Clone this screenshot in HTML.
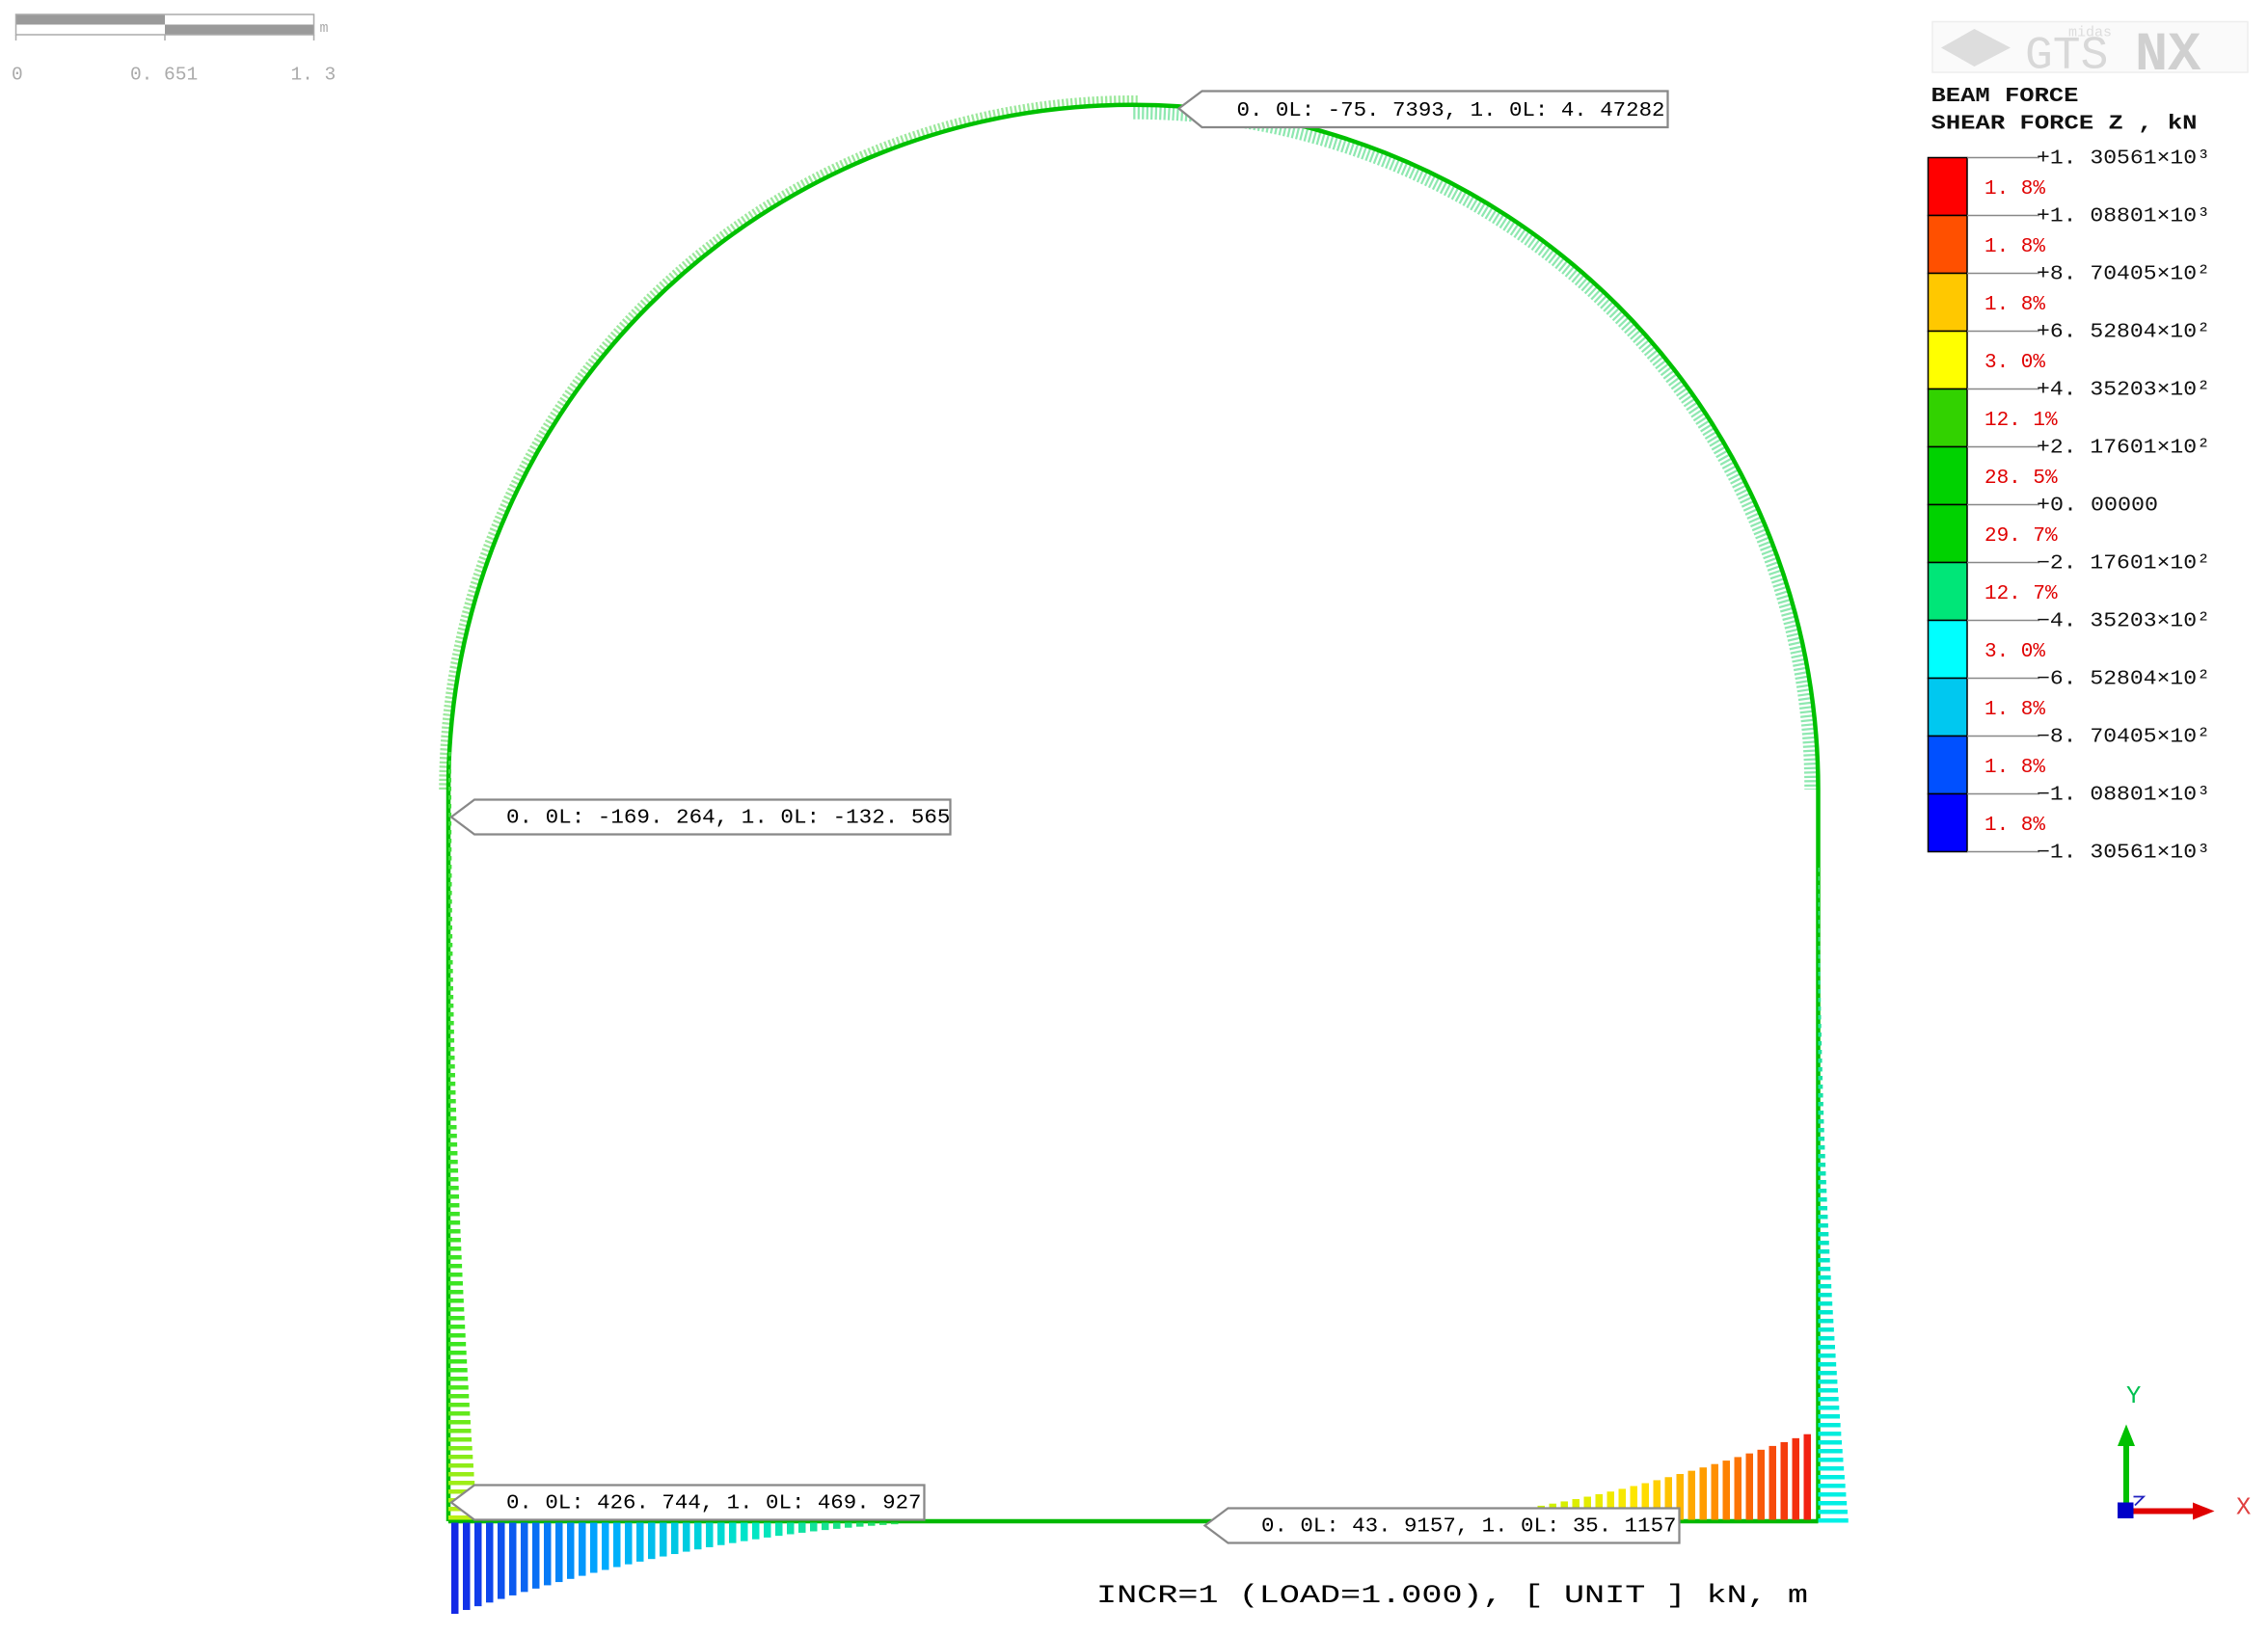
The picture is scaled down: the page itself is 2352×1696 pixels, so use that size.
<!DOCTYPE html>
<html><head><meta charset="utf-8"><style>
html,body{margin:0;padding:0;background:#fff;overflow:hidden}
svg{display:block}
text{font-family:"Liberation Mono","DejaVu Sans Mono",monospace}
</style></head><body>
<svg id="s" width="2352" height="1696" viewBox="0 0 1568 1130.67" preserveAspectRatio="none" xmlns="http://www.w3.org/2000/svg">
<rect width="1568" height="1131" fill="#fff"/>
<!-- scale bar -->
<rect x="11" y="10" width="103" height="7" fill="#9a9a9a"/>
<rect x="114" y="17" width="103" height="7" fill="#9a9a9a"/>
<rect x="11" y="10" width="206" height="14" fill="none" stroke="#aaa" stroke-width="1"/>
<line x1="11" y1="24" x2="11" y2="28" stroke="#aaa"/><line x1="114" y1="24" x2="114" y2="28" stroke="#aaa"/><line x1="217" y1="24" x2="217" y2="28" stroke="#aaa"/>
<g fill="#aaa" font-size="13">
<text x="8" y="55">0</text><text x="90" y="55">0. 651</text><text x="201" y="55">1. 3</text><text x="221" y="22" font-size="10">m</text>
</g>
<!-- arch -->
<path d="M307,546 A476.5,476.5 0 0 1 786.5,69.5" fill="none" stroke="#9ce89c" stroke-width="7" stroke-dasharray="1.5 1.5"/>
<path d="M783.5,78 A468,468 0 0 1 1252,546" fill="none" stroke="#8ee8b0" stroke-width="9" stroke-dasharray="1.5 1.5"/>
<path d="M310,546 A473.5,473.5 0 0 1 1257,546" fill="none" stroke="#00c000" stroke-width="3"/>
<line x1="310" y1="546" x2="310" y2="1052" stroke="#00c000" stroke-width="3"/>
<line x1="1257" y1="546" x2="1257" y2="1052" stroke="#00c000" stroke-width="3"/>
<line x1="310" y1="1052" x2="1257" y2="1052" stroke="#00b800" stroke-width="3"/>
<g id="bars"></g>
<!-- labels -->
<g font-size="14" fill="#000" stroke="none">
<path d="M815,75 L831,63 H1153 V88 H831 Z" fill="#fff" stroke="#888" stroke-width="1.5"/>
<text x="855" y="80" textLength="296" lengthAdjust="spacingAndGlyphs">0. 0L: -75. 7393, 1. 0L: 4. 47282</text>
<path d="M312,565 L328,553 H657 V577 H328 Z" fill="#fff" stroke="#888" stroke-width="1.5"/>
<text x="350" y="569" textLength="307" lengthAdjust="spacingAndGlyphs">0. 0L: -169. 264, 1. 0L: -132. 565</text>
<path d="M312,1039 L328,1027 H639 V1051 H328 Z" fill="#fff" stroke="#888" stroke-width="1.5"/>
<text x="350" y="1043" textLength="287" lengthAdjust="spacingAndGlyphs">0. 0L: 426. 744, 1. 0L: 469. 927</text>
<path d="M833,1055 L849,1043 H1161 V1067 H849 Z" fill="#fff" stroke="#888" stroke-width="1.5"/>
<text x="872" y="1059" textLength="287" lengthAdjust="spacingAndGlyphs">0. 0L: 43. 9157, 1. 0L: 35. 1157</text>
<text x="758" y="1108" font-size="18" font-family="Liberation Serif,serif" textLength="492" lengthAdjust="spacingAndGlyphs">INCR=1  (LOAD=1.000),    [ UNIT ]     kN,    m</text>
</g>
<!-- logo -->
<rect x="1336" y="15" width="218" height="35" fill="#fafafa" stroke="#eee"/>
<path d="M1342,33 L1365,20 L1390,33 L1365,46 Z" fill="#ddd"/>
<text x="1400" y="47" font-size="32" fill="#d8d8d8" font-family="Liberation Sans,sans-serif">GTS</text>
<text x="1476" y="48" font-size="38" font-weight="bold" fill="#d0d0d0" font-family="Liberation Sans,sans-serif">NX</text>
<text x="1430" y="25" font-size="10" fill="#ddd" font-family="Liberation Sans,sans-serif">midas</text>
<!-- legend -->
<g font-size="14" font-weight="bold" fill="#111">
<text x="1335" y="70" textLength="102" lengthAdjust="spacingAndGlyphs">BEAM FORCE</text>
<text x="1335" y="89" textLength="184" lengthAdjust="spacingAndGlyphs">SHEAR FORCE Z , kN</text>
</g>
<g id="leg"></g>
<!-- axis -->
<line x1="1470" y1="1045" x2="1470" y2="1000" stroke="#00c000" stroke-width="4"/>
<path d="M1464,1000 L1470,985 L1476,1000 Z" fill="#00c000"/>
<line x1="1470" y1="1045" x2="1516" y2="1045" stroke="#e00000" stroke-width="4"/>
<path d="M1516,1039 L1531,1045 L1516,1051 Z" fill="#e00000"/>
<rect x="1464" y="1039" width="11" height="11" fill="#0000c8"/>
<path d="M1475,1035 H1482 L1476,1041" fill="none" stroke="#2020c0" stroke-width="1.2"/>
<text x="1470" y="970" font-size="17" fill="#00c050" font-family="Liberation Sans,sans-serif">Y</text>
<text x="1546" y="1047" font-size="17" fill="#e04040" font-family="Liberation Sans,sans-serif">X</text>
</svg>
<script>
var NS="http://www.w3.org/2000/svg";
function el(p,t,a){var e=document.createElementNS(NS,t);for(var k in a)e.setAttribute(k,a[k]);p.appendChild(e);return e;}
var cols=["#ff0000","#ff5000","#ffc800","#ffff00","#32d200","#00d200","#00d200","#00e678","#00ffff","#00c8f0","#0050ff","#0000ff"];
var vals=["+1. 30561×10³","+1. 08801×10³","+8. 70405×10²","+6. 52804×10²","+4. 35203×10²","+2. 17601×10²","+0. 00000","−2. 17601×10²","−4. 35203×10²","−6. 52804×10²","−8. 70405×10²","−1. 08801×10³","−1. 30561×10³"];
var pc=["1. 8%","1. 8%","1. 8%","3. 0%","12. 1%","28. 5%","29. 7%","12. 7%","3. 0%","1. 8%","1. 8%","1. 8%"];
var L=document.getElementById("leg");
for(var i=0;i<12;i++){el(L,"rect",{x:1333,y:109+i*40,width:27,height:40,fill:cols[i],stroke:"#000","stroke-width":1});}
for(var i=0;i<13;i++){var y=109+i*40;el(L,"line",{x1:1360,y1:y,x2:1410,y2:y,stroke:"#888","stroke-width":1});
var a={x:1408,y:y+4,"font-size":14,fill:"#111"};if(i!=6){a.textLength=120;a.lengthAdjust="spacingAndGlyphs";}else{a.textLength=84;a.lengthAdjust="spacingAndGlyphs";}
var t=el(L,"text",a);t.textContent=vals[i];}
for(var i=0;i<12;i++){var t=el(L,"text",{x:1372,y:134+i*40,"font-size":14,fill:"#e00000"});t.textContent=pc[i];}
function lerp(a,b,t){return a+(b-a)*t}
function grad(stops,t){for(var i=0;i<stops.length-1;i++){if(t<=stops[i+1][0]){var u=(t-stops[i][0])/(stops[i+1][0]-stops[i][0]);var a=stops[i][1],b=stops[i+1][1];return "rgb("+Math.round(lerp(a[0],b[0],u))+","+Math.round(lerp(a[1],b[1],u))+","+Math.round(lerp(a[2],b[2],u))+")";}}var c=stops[stops.length-1][1];return "rgb("+c+")";}
var B=document.getElementById("bars");
var bs=[[0,[20,40,230]],[0.3,[0,170,255]],[0.6,[0,230,200]],[1,[60,220,60]]];
for(var x=312;x<660;x+=8){var t=(x-312)/340;var d=63*Math.pow(1-t,1.8);if(d<1)continue;
el(B,"rect",{x:x,y:1053,width:5,height:d,fill:grad(bs,t)});}
var rs=[[0,[120,230,60]],[0.35,[210,240,0]],[0.55,[255,230,0]],[0.75,[255,140,0]],[1,[240,20,20]]];
for(var x=975;x<1254;x+=8){var t=(x-975)/280;var h=62*Math.pow(t,1.6);if(h<1)continue;
el(B,"rect",{x:x,y:1051-h,width:5,height:h,fill:grad(rs,t)});}
for(var y=520;y<1050;y+=6){var t=(y-520)/530;var w=2+18*Math.pow(t,2.2);
el(B,"rect",{x:310,y:y,width:w,height:3,fill:grad([[0,[60,220,60]],[0.8,[60,230,30]],[1,[190,240,20]]],t)});}
for(var y=600;y<1052;y+=6){var t=(y-600)/452;var w=1+20*Math.pow(t,2);
el(B,"rect",{x:1257,y:y,width:w,height:3,fill:grad([[0,[60,220,120]],[0.6,[0,230,200]],[1,[0,240,230]]],t)});}
</script>
</body></html>
